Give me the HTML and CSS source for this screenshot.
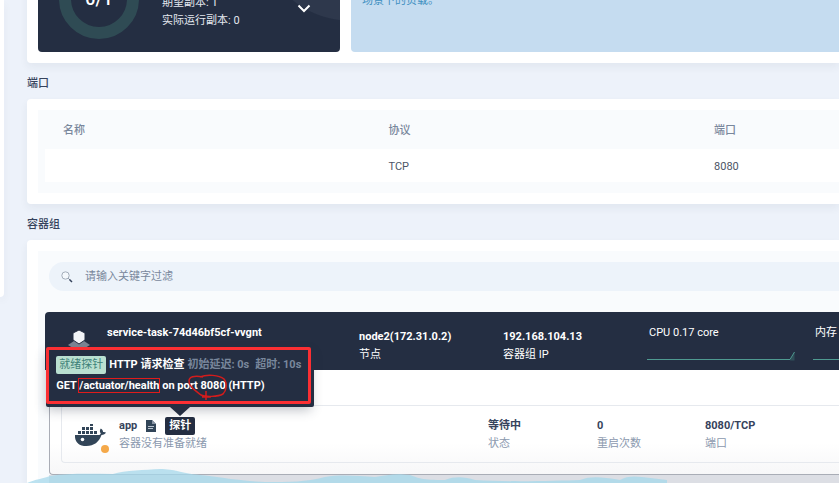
FILE: index.html
```
<!DOCTYPE html>
<html lang="zh-CN">
<head>
<meta charset="utf-8">
<title>service-task</title>
<link rel="stylesheet" href="styles.css">
</head>
<body>
<div class="page">
  <aside class="side"></aside>
  <main class="main">
    <section class="card summary">
      <div class="replicas">
        <div class="donut">0/1</div>
        <div class="replica-text">
          <p>期望副本: 1</p>
          <p>实际运行副本: 0</p>
        </div>
        <button class="scale" type="button" aria-label="减少副本">
          <svg width="14" height="9" viewBox="0 0 14 9"><path d="M1.500 1.500 7 7l5.500-5.500" fill="none" stroke="#fff" stroke-width="2"/></svg>
        </button>
      </div>
      <div class="tip-panel"><p>场景下的负载。</p></div>
    </section>

    <h2 class="title">端口</h2>
    <section class="card">
      <div class="panel">
        <table class="ports">
          <thead><tr><th>名称</th><th>协议</th><th>端口</th></tr></thead>
          <tbody><tr><td></td><td>TCP</td><td>8080</td></tr></tbody>
        </table>
      </div>
    </section>

    <h2 class="title">容器组</h2>
    <section class="card">
      <div class="panel">
        <label class="search">
          <svg width="12" height="12" viewBox="0 0 12 12"><circle cx="4.500" cy="4.500" r="3.700" fill="#f4f8fc" stroke="#a3adba"/><path d="m7.300 7.300 1.500 1.500" stroke="#8590a0"/><path d="m8.500 8.500 2.500 2.500" stroke="#36435c" stroke-width="1.500"/></svg>
          <input type="text" placeholder="请输入关键字过滤" aria-label="请输入关键字过滤">
        </label>
        <article class="pod">
          <header class="pod-head">
            <svg class="pod-icon" width="22" height="18" viewBox="0 0 22 18"><path d="M0 15 6 11h10l6 4-5 3H5z" fill="#7c8594"/><path d="M11 0l6 3v7l-6 4-6-4V3z" fill="#f3f5f8" stroke="#242e42"/></svg>
            <strong class="pod-name">service-task-74d46bf5cf-vvgnt</strong>
            <div class="pair"><strong>node2(172.31.0.2)</strong><span>节点</span></div>
            <div class="pair"><strong>192.168.104.13</strong><span>容器组 IP</span></div>
            <div class="metric"><span>CPU 0.17 core</span>
              <svg width="148" height="10" viewBox="0 0 148 10"><path d="M143 9.500 147.500 1v8.500z" fill="#2f4e58"/><path d="M0 8.500h143L147.500 1" fill="none" stroke="#4f9a91"/></svg>
            </div>
            <div class="metric"><span>内存</span>
              <svg width="148" height="10" viewBox="0 0 148 10"><path d="M0 8.500h148" fill="none" stroke="#4f9a91"/></svg>
            </div>
          </header>
          <div class="pod-body">
            <div class="container">
              <div class="docker">
                <svg width="31" height="23" viewBox="0 0 31 23">
                  <path d="M0 11h23.500c1.500 0 2-.6 2.300-1.500-1.300-1.700-1.200-3.500 0-5 1.500 1 2.200 2 2.300 3.500 1-.2 2 0 2.900.5-.8 1.700-2.300 2.400-4.500 2.500C24 18 19 22 11.500 22 4 22-.6 18 0 11z" fill="#324558"/>
                  <path d="M3 7h3v3H3zM7 7h3v3H7zM11 7h3v3h-3zM15 7h3v3h-3zM19 7h3v3h-3zM7 3h3v3H7zM11 3h3v3h-3zM15 3h3v3h-3zM15 0h3v2h-3z" fill="#324558"/>
                  <circle cx="7.500" cy="15.500" r="1.800" fill="#fff"/>
                </svg>
                <i class="status"></i>
              </div>
              <div class="pair app">
                <div class="app-line">
                  <strong>app</strong>
                  <svg width="10" height="12" viewBox="0 0 10 12"><path d="M0 0h6l4 4v8H0z" fill="#324558"/><path d="M6 0v4h4" fill="#8995a5"/><path d="M2 6.500h6M2 8.500h5" stroke="#b9c3cf"/></svg>
                  <div class="probe">
                    <span class="probe-tag">探针</span>
                    <div class="tooltip" role="tooltip">
                      <div class="probe-row">
                        <span class="ready">就绪探针</span>
                        <strong>HTTP 请求检查</strong>
                        <span class="muted">初始延迟: 0s</span>
                        <span class="muted late">超时: 10s</span>
                      </div>
                      <p>GET <span class="path">/actuator/health</span> on port <span class="port">8080<svg class="scrawl" width="40" height="28" viewBox="0 0 40 28"><path d="M12 4C19 1 31 2 36 6c4 5 2 12-1 15-5 3-18 3-22 1C7 17 1 14 1 8c0-4 5-6 14-4M18 18v9M14 24h9" fill="none" stroke="#d31c1c" stroke-width="1.500"/></svg></span> (HTTP)</p>
                    </div>
                  </div>
                </div>
                <span>容器没有准备就绪</span>
              </div>
              <div class="pair"><strong>等待中</strong><span>状态</span></div>
              <div class="pair"><strong>0</strong><span>重启次数</span></div>
              <div class="pair"><strong>8080/TCP</strong><span>端口</span></div>
            </div>
          </div>
        </article>
      </div>
    </section>
  </main>
</div>
<svg class="clouds" viewBox="0 0 839 15" preserveAspectRatio="none" aria-hidden="true">
  <path d="M27 15C36 11 42 11 50 8c20-3 40-2 63-2 12-4 32-4 47-5 15 0 20 4 40 6s40 6 65 7c25 0 40 0 60-5 15-3 35-1 50 0 12-2 20-4 35-2 8 3 12 5 35 5 10-4 20-3 30 0 30 2 80 1 105 0 12-4 20-3 40 0 6-4 14-4 22-3l25 3v3z" fill="#a5d8eb" fill-opacity=".75"/>
</svg>
</body>
</html>
```

FILE: styles.css
```
* { box-sizing: border-box; }

html, body { height: 100%; }

body {
  margin: 0;
  overflow: hidden;
  background: #edf2fa;
  color: #36435c;
  font: 11px/18px Roboto, "Noto Sans CJK SC", sans-serif;
}

p, h2 { margin: 0; }

strong { font-weight: 700; }

svg { display: block; flex: none; }

.page {
  display: flex;
  align-items: flex-start;
  gap: 23px;
}

.side {
  flex: none;
  width: 4px;
  height: 297px;
  background: #fff;
  border-radius: 0 0 4px 0;
  box-shadow: 0 4px 8px rgba(36, 46, 66, .06);
}

/* The page is scrolled part of the way past the summary card. */
.main {
  flex: 1;
  min-width: 0;
  margin-top: -71px;
}

.card {
  padding: 11px 0 11px 11px;
  background: #fff;
  border-radius: 4px 0 0 4px;
  box-shadow: 0 4px 8px rgba(36, 46, 66, .06);
}

.summary {
  display: flex;
  gap: 11px;
}

.replicas {
  display: flex;
  align-items: center;
  width: 302px;
  height: 112px;
  padding: 6px 29px 0 21px;
  border-radius: 4px;
  background: radial-gradient(circle at 312px -10px, #2e384c 90px, #242e42 91px);
  color: #fff;
}

.donut {
  display: flex;
  align-items: center;
  justify-content: center;
  width: 80px;
  height: 80px;
  border: 12px solid #2f4b54;
  border-radius: 50%;
  font-size: 18px;
  font-weight: 500;
}

.replica-text {
  flex: 1;
  padding: 25px 0 0 23px;
  color: #e3e7ee;
}

.scale {
  padding: 0;
  border: 0;
  margin-top: 18px;
  background: none;
}

.tip-panel {
  flex: 1;
  padding: 52px 11px 0;
  border-radius: 4px 0 0 4px;
  background: #c5dcf0;
  color: #3d8fc0;
}

.title {
  padding: 12px 0 6px;
  font-size: 11px;
  line-height: 18px;
  font-weight: 500;
}

.panel {
  padding: 0 0 11px 7px;
  background: #f9fbfd;
}

.ports {
  width: 100%;
  table-layout: fixed;
  border-collapse: collapse;
  text-align: left;
}

.ports th, .ports td { padding: 2px 18px 0; }

.ports th {
  width: 41%;
  height: 39px;
  color: #79879c;
  font-weight: 500;
}

.ports th:last-child { width: 18%; }

.ports td {
  height: 33px;
  background: #fff;
  color: #4c5566;
}

.search {
  display: flex;
  align-items: center;
  gap: 12px;
  height: 29px;
  margin: 0 0 21px 4px;
  padding-left: 12px;
  border-radius: 15px 0 0 15px;
  background: #edf3fa;
}

.search input {
  flex: 1;
  padding: 0;
  border: 0;
  outline: 0;
  background: none;
  font: inherit;
}

.search input::placeholder { color: #79879c; }

.card:last-child { padding-bottom: 0; }

.card:last-child .panel {
  padding-top: 11px;
  padding-bottom: 0;
}

.pod-head {
  display: grid;
  grid-template-columns: 62px 252px 144px 144px 166px 148px;
  height: 58px;
  padding-top: 12px;
  overflow: hidden;
  border-radius: 4px 0 0;
  background: #242e42;
  color: #fff;
}

.pod-icon { margin: 6px 0 0 23px; }

.pod-head .pair { padding-top: 4px; }

.pair strong, .pair > span { display: block; }

.metric span {
  display: block;
  padding-left: 2px;
}

.metric svg { margin-top: 9px; }

.pod-body {
  margin-left: 4px;
  padding: 35px 0 11px 11px;
  border: 1px solid #a9adb6;
  border-width: 0 0 1px 1px;
  border-radius: 0 0 0 4px;
  background: linear-gradient(#fff 70%, #f7f7f8);
}

.container {
  display: grid;
  grid-template-columns: 57px 369px 109px 108px 1fr;
  padding: 11px 0 9px;
  border: 1px solid #e6e9ee;
  border-right: 0;
  border-radius: 4px 0 0 4px;
}

.container .pair > span { color: #8b99ae; }

.docker {
  position: relative;
  padding: 7px 0 0 13px;
}

.status {
  position: absolute;
  left: 39px;
  bottom: 0;
  width: 8px;
  height: 8px;
  border-radius: 50%;
  background: #f5a94a;
}

.app-line {
  display: flex;
  align-items: center;
  gap: 9px;
  height: 18px;
}

.probe { position: relative; }

.probe-tag {
  display: block;
  padding: 0 4px;
  border-radius: 2px;
  background: #242e42;
  color: #fff;
  font-weight: 700;
}

.tooltip {
  position: absolute;
  bottom: 31px;
  left: 50%;
  width: 265px;
  padding: 6px 7px;
  margin-left: -134px;
  border: 3px solid #fb2f33;
  border-radius: 2px;
  background: #242e42;
  box-shadow: 0 3px 0 #242e42, 3px 3px 0 #242e42, 0 6px 12px rgba(36, 46, 66, .3);
  color: #fff;
  font-weight: 700;
  white-space: nowrap;
}

.tooltip::after {
  content: "";
  position: absolute;
  top: calc(100% + 6px);
  left: 50%;
  margin-left: -9px;
  border: 10px solid transparent;
  border-top: 9px solid #242e42;
  border-bottom: 0;
}

.probe-row {
  display: flex;
  gap: 3px;
  margin-bottom: 3px;
}

.ready {
  padding: 0 3px;
  border-radius: 2px;
  background: #b9dfd0;
  color: #3e8178;
  font-weight: 400;
}

.muted { color: #79879c; }

.late { margin-left: 3px; }

.path { outline: 1px solid #e01b1b; }

.port { position: relative; }

.scrawl {
  position: absolute;
  left: -12px;
  top: -6px;
}

.clouds {
  position: fixed;
  left: 0;
  bottom: 0;
  width: 100%;
  height: 15px;
}

.pod::after {
  content: "";
  display: block;
  height: 20px;
  margin-left: 4px;
  background: #dcdee4;
}
```
